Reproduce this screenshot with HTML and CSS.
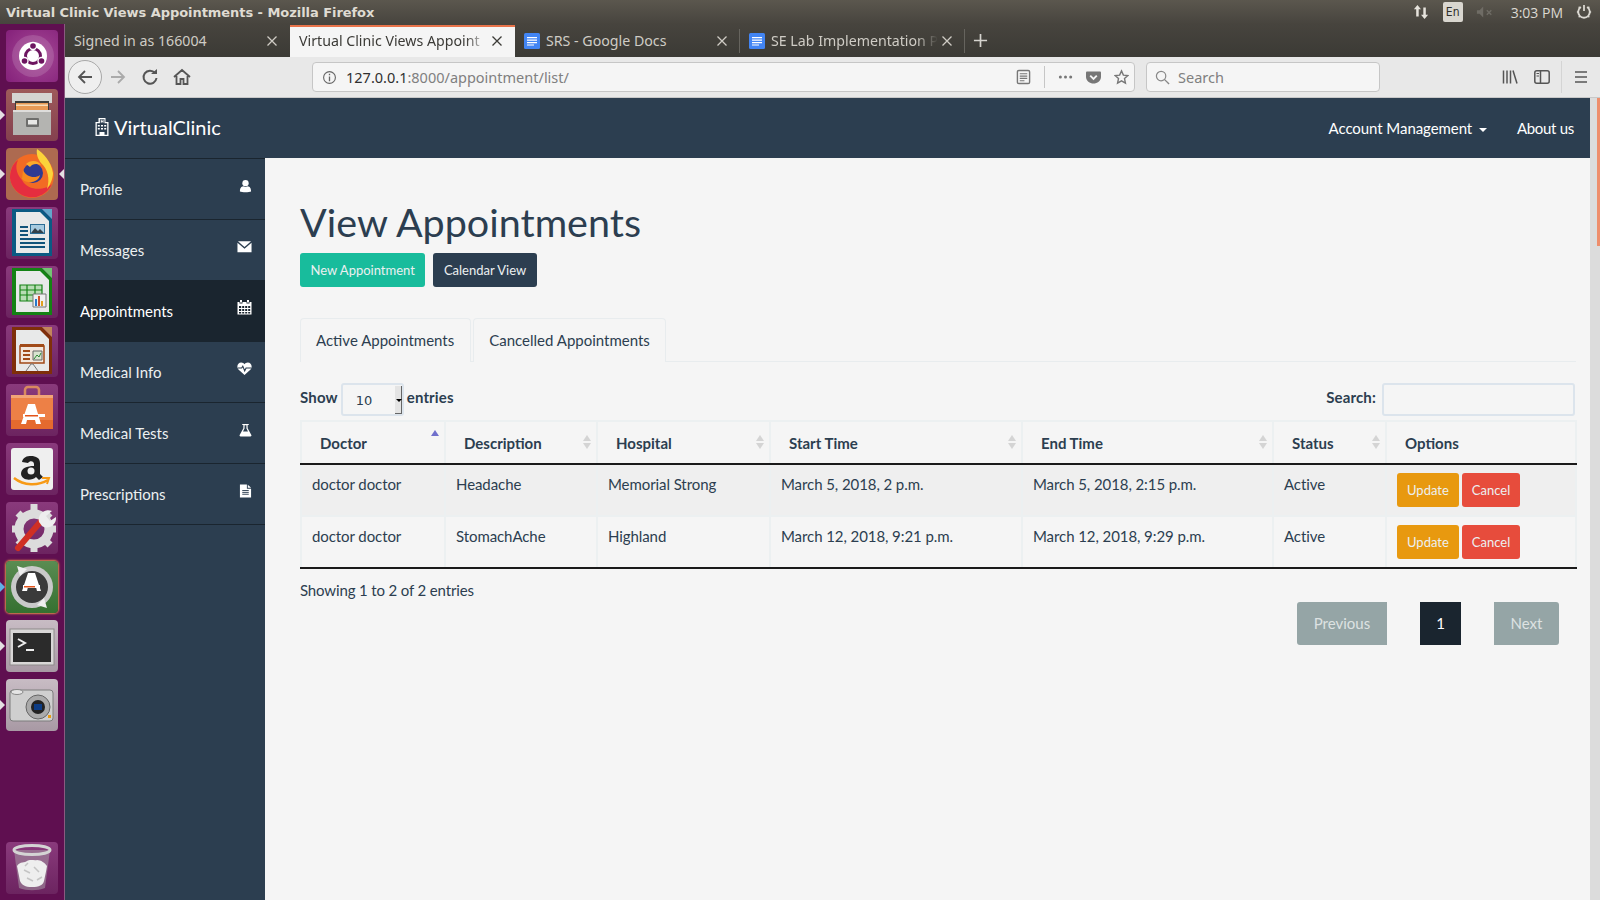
FILE: index.html
```html
<!DOCTYPE html>
<html lang="en">
<head>
<meta charset="utf-8">
<title>Virtual Clinic Views Appointments</title>
<link rel="stylesheet" href="styles.css">
</head>
<body>
<div class="screen">
  <header class="panel">
    <span class="panel-title">Virtual Clinic Views Appointments - Mozilla Firefox</span>
    <div class="indicators">
      <svg class="ind-net" viewBox="0 0 18 18"><path d="M5 1 1 6h2.600v8h2.800V6H9zM13 17l4-5h-2.600V4h-2.800v8H9z" fill="#e6e3dc"/></svg>
      <span class="ind-lang">En</span>
      <svg class="ind-sound" viewBox="0 0 20 14"><path d="M1 5h3l4-4v12l-4-4H1z" fill="#6f6c65"/><path d="m12 5 5 5m0-5-5 5" stroke="#6f6c65" stroke-width="1.600"/></svg>
      <span class="ind-clock">3:03 PM</span>
      <svg class="ind-power" viewBox="0 0 18 18"><path d="M5.500 3.500a6.500 6.500 0 1 0 7 0M9 1v7" fill="none" stroke="#dcd9d2" stroke-width="2"/><path d="M1 9h2m12 0h2M3 3l1.500 1.500M3 15l1.500-1.500M15 15l-1.500-1.500M15 3l-1.500 1.500" stroke="#dcd9d2" stroke-width="1.500"/></svg>
    </div>
  </header>
  <div class="desk">
    <nav class="launcher">
      <div class="tile tile-ubuntu">
        <svg viewBox="0 0 52 52"><circle cx="27" cy="26" r="21" fill="#fff" opacity=".14"/><circle cx="27" cy="26" r="14" fill="#fff"/><circle cx="27" cy="26" r="7.500" fill="none" stroke="#6d1560" stroke-width="3"/><circle cx="27" cy="16" r="4.200" fill="#fff"/><circle cx="18.500" cy="31" r="4.200" fill="#fff"/><circle cx="35.500" cy="31" r="4.200" fill="#fff"/><circle cx="27" cy="16" r="2.800" fill="#6d1560"/><circle cx="18.500" cy="31" r="2.800" fill="#6d1560"/><circle cx="35.500" cy="31" r="2.800" fill="#6d1560"/></svg>
      </div>
      <div class="tile tile-files has-pip">
        <svg viewBox="0 0 52 52"><path d="M6 4h40v10H6z" fill="#d5d5d2"/><path d="M9 12h34v9H9z" fill="#3d3d3b"/><path d="M10 14h32v7H10z" fill="#e89a55"/><path d="M10 15.500h32v1.500H10z" fill="#f7dcb8"/><path d="M7 21h38v25H7z" fill="#b4b4b1"/><path d="M7 21h38v2H7z" fill="#dedddb"/><rect x="20" y="29" width="13" height="9" rx="1" fill="#6e6e6c"/><rect x="22" y="31" width="9" height="4.500" fill="#e8e8e6"/></svg>
      </div>
      <div class="tile tile-firefox has-pip has-focus">
        <svg viewBox="0 0 52 52"><circle cx="26" cy="28" r="22" fill="#f26b24"/><path d="M4 30a22 22 0 0 0 42 6c-6 6-24 8-30-4C12 28 8 20 12 12 6 16 4 24 4 30z" fill="#e52e3f"/><path d="M31 1c6 4 14 12 16 24 0 6-3 12-6 16 3-10 1-20-6-26-3-4-5-9-4-14z" fill="#fbd33a"/><circle cx="27" cy="25" r="10" fill="#2f3a92"/><path d="M17 22c3 7 12 9 17 5-1 7-12 10-18 4z" fill="#f68a1f"/><path d="M20 16c4-4 12-4 15 1-5-2-9-1-11 2z" fill="#fba92b"/></svg>
      </div>
      <div class="tile tile-writer">
        <svg viewBox="0 0 52 52"><path d="M6 2h30l10 10v37H6z" fill="#0b5a83"/><path d="M36 2h10v10z" fill="#63a7cb"/><path d="M10 5h24l9 9v32H10z" fill="#e8e9e9"/><path d="M14 19h8v2h-8zm0 4h8v2h-8zm0 4h8v2h-8zm0 4h25v2H14zm0 4h25v2H14zm0 4h25v2H14z" fill="#11537a"/><path d="M24 17h15v10H24z" fill="#2c6c94"/><path d="M25 18h13v8H25z" fill="#a7cbe0"/><path d="m25 26 4-5 3 3 2-2 4 4z" fill="#33414a"/></svg>
      </div>
      <div class="tile tile-calc">
        <svg viewBox="0 0 52 52"><path d="M6 2h30l10 10v37H6z" fill="#148214"/><path d="M36 2h10v10z" fill="#74c474"/><path d="M10 5h24l9 9v32H10z" fill="#e8e9e9"/><path d="M14 19h22v16H14z" fill="#b8dcb4"/><path d="M14 19h22v16H14zm0 5h22m-22 5h22M21 19v16m8-16v16" fill="none" stroke="#148214" stroke-width="1.200"/><path d="M27 28h13v13H27z" fill="#f0f0f0" stroke="#777"/><path d="M29 33h2v7h-2z" fill="#2a77c9"/><path d="M32 30h2v10h-2z" fill="#d14f2a"/><path d="M35 35h2v5h-2z" fill="#e0a020"/></svg>
      </div>
      <div class="tile tile-impress">
        <svg viewBox="0 0 52 52"><path d="M6 2h30l10 10v37H6z" fill="#7f2f0a"/><path d="M36 2h10v10z" fill="#c2855c"/><path d="M10 5h24l9 9v32H10z" fill="#e8e9e9"/><path d="M14 21h24v17H14z" fill="#f3e7dd" stroke="#a14a18" stroke-width="1.500"/><path d="M14 19h24v3H14zm3 6h7v2h-7zm0 4h7v2h-7zm0 4h7v2h-7z" fill="#a14a18"/><path d="M27 26h9v9h-9z" fill="#d8e4d0" stroke="#666"/><path d="m28 34 3-4 2 2 2-4" stroke="#2b8a34" fill="none"/><path d="m20 46 5-7h2l5 7" fill="none" stroke="#777"/></svg>
      </div>
      <div class="tile tile-store">
        <svg viewBox="0 0 52 52"><path d="M19 14v-8a3 3 0 0 1 3-3h8a3 3 0 0 1 3 3v8" fill="none" stroke="#d98a5f" stroke-width="2.500"/><path d="M5 11h42v34H5z" fill="#ed8046"/><path d="M5 11h42v3H5z" fill="#f2a477"/><path d="M5 36h42v9H5z" fill="#e56a2e"/><path d="M22 20h7l6 20h-5l-1-4h-8l-1 4h-5z" fill="#fff"/><path d="M17 30h22v3H17z" fill="#fff"/><path d="M19 31h13v1.500H19z" fill="#e3541b"/></svg>
      </div>
      <div class="tile tile-amazon">
        <svg viewBox="0 0 52 52"><rect x="5" y="5" width="42" height="42" rx="3" fill="#efefef"/><path d="M16 19c1-5 5-6 9-6 5 0 9 2 9 7v11l3 3-4 3-3-3c-4 4-14 4-15-3 0-6 6-8 13-8v-2c0-3-4-4-6-1z" fill="#222"/><circle cx="25" cy="28" r="3.500" fill="#efefef"/><path d="M8 35c10 8 24 8 34 2" fill="none" stroke="#f79a16" stroke-width="2.500"/><path d="m36 35 7 0-2 6" fill="none" stroke="#f79a16" stroke-width="2"/></svg>
      </div>
      <div class="tile tile-tweak">
        <svg viewBox="0 0 52 52"><circle cx="28" cy="27" r="15" fill="none" stroke="#dcdcdc" stroke-width="9"/><path d="M28 2v9m0 32v7M6 27h7m30 0h7M12 11l5 5m22 22 5 5M12 43l5-5m22-22 5-5" stroke="#dcdcdc" stroke-width="7"/><path d="m12 46 24-28" stroke="#cf2f23" stroke-width="6" stroke-linecap="round"/><path d="M33 20c-2-8 6-14 13-11l-6 5 4 5 6-4c1 8-8 13-14 9z" fill="#eee"/></svg>
      </div>
      <div class="tile tile-update has-pip-blue">
        <svg viewBox="0 0 52 52"><circle cx="26" cy="26" r="21" fill="#c9c9c9"/><circle cx="26" cy="26" r="16" fill="#3a3a3a"/><path d="M22 12h7l6 18h-4l-1-4h-8l-1 4h-5z" fill="#fff"/><path d="M17 24h17v3H17z" fill="#fff"/><path d="M18 25h11v1.500H18z" fill="#e3541b"/><path d="m11 5 3 10 7-7z" fill="#eee"/><path d="m41 47-3-10-7 7z" fill="#eee"/></svg>
      </div>
      <div class="tile tile-terminal has-pip">
        <svg viewBox="0 0 52 52"><rect x="4" y="9" width="44" height="36" fill="#d9d7d7" stroke="#8d8a8a"/><rect x="7" y="13" width="38" height="29" fill="#2b2b2b"/><path d="m12 19 7 4-7 4" fill="none" stroke="#eee" stroke-width="2"/><path d="M20 29h8v2h-8z" fill="#eee"/></svg>
      </div>
      <div class="tile tile-camera has-pip">
        <svg viewBox="0 0 52 52"><rect x="4" y="11" width="43" height="31" rx="3" fill="#cfcfcf" stroke="#7c7c7c"/><ellipse cx="11" cy="13" rx="6" ry="2.500" fill="#e5e5e5" stroke="#888"/><circle cx="32" cy="28" r="12" fill="#aaa" stroke="#666"/><circle cx="32" cy="28" r="7" fill="#222"/><rect x="28" y="25" width="8" height="6" fill="#0d3c84"/><rect x="42" y="36" width="3" height="3" fill="#e89a12"/></svg>
      </div>
      <div class="tile tile-trash">
        <svg viewBox="0 0 52 52"><path d="M8 8 13 46c8 3 18 3 26 0l5-38z" fill="#a89aa6" opacity=".55"/><ellipse cx="26" cy="8" rx="18" ry="4.500" fill="none" stroke="#d4d4d4" stroke-width="3"/><path d="M11 24c3-5 8-3 10-5 3-2 8 0 10-1 4 0 8 3 10 6-1 6-2 10-3 15-1 4-5 6-12 6s-10-2-12-6c-1-5-2-10-3-15z" fill="#eee"/><path d="m18 28 6 3m4-6 5 5m-12 6 6 3m4-1 5-3m-17-11 3-3" stroke="#c4c4c4" stroke-width="1.500"/></svg>
      </div>
    </nav>
    <div class="firefox">
      <div class="tabstrip">
        <div class="ftab"><span class="ftab-text">Signed in as 166004</span><svg class="ftab-x" viewBox="0 0 10 10"><path d="m.5.5 9 9m0-9-9 9"/></svg></div>
        <div class="ftab ftab-active"><span class="ftab-text ftab-fade">Virtual Clinic Views Appoint</span><svg class="ftab-x" viewBox="0 0 10 10"><path d="m.5.5 9 9m0-9-9 9"/></svg></div>
        <div class="ftab ftab-sep">
          <svg class="doc-ico" viewBox="0 0 16 16"><rect width="16" height="16" rx="1.500" fill="#4285f4"/><path d="M3 4h10v1.200H3zm0 2.500h10v1.200H3zm0 2.500h10v1.200H3zm0 2.400h7v1H3z" fill="#fff"/></svg>
          <span class="ftab-text">SRS - Google Docs</span><svg class="ftab-x" viewBox="0 0 10 10"><path d="m.5.5 9 9m0-9-9 9"/></svg>
        </div>
        <div class="ftab ftab-sep">
          <svg class="doc-ico" viewBox="0 0 16 16"><rect width="16" height="16" rx="1.500" fill="#4285f4"/><path d="M3 4h10v1.200H3zm0 2.500h10v1.200H3zm0 2.500h10v1.200H3zm0 2.400h7v1H3z" fill="#fff"/></svg>
          <span class="ftab-text ftab-fade">SE Lab Implementation P</span><svg class="ftab-x" viewBox="0 0 10 10"><path d="m.5.5 9 9m0-9-9 9"/></svg>
        </div>
        <svg class="newtab" viewBox="0 0 16 16"><path d="M8 1v14M1 8h14" stroke="#d6d4cf" stroke-width="1.800"/></svg>
      </div>
      <div class="toolbar">
        <div class="back">
          <svg viewBox="0 0 18 18" class="tb18"><path d="M16 9H3m6-6L3 9l6 6" fill="none" stroke="#555" stroke-width="1.800"/></svg>
        </div>
        <svg viewBox="0 0 18 18" class="tb18 tb-forward"><path d="M2 9h13M9 3l6 6-6 6" fill="none" stroke="#aaa" stroke-width="1.800"/></svg>
        <svg viewBox="0 0 18 18" class="tb18 tb-reload"><path d="M14 5a6.500 6.500 0 1 0 1.500 5" fill="none" stroke="#555" stroke-width="2"/><path d="M10 6h6V1z" fill="#555"/></svg>
        <svg viewBox="0 0 18 18" class="tb18 tb-home"><path d="M1 9 9 2l8 7M3.500 8v8h4v-5h3v5h4V8" fill="none" stroke="#555" stroke-width="1.800"/></svg>
        <div class="urlbar">
          <svg viewBox="0 0 16 16" class="info"><circle cx="8" cy="8" r="6.300" fill="none" stroke="#666" stroke-width="1.200"/><path d="M7.300 7h1.400v5H7.300zm0-3h1.400v1.500H7.300z" fill="#666"/></svg>
          <span class="url"><b>127.0.0.1</b>:8000/appointment/list/</span>
          <svg viewBox="0 0 16 16" class="url-ico"><rect x="1.500" y="1" width="13" height="14" rx="1.500" fill="none" stroke="#777" stroke-width="1.500"/><path d="M4 4.500h8M4 7h8M4 9.500h8M4 12h5" stroke="#777" stroke-width="1.200"/></svg>
          <span class="url-sep"></span>
          <svg viewBox="0 0 16 16" class="url-ico url-dots"><circle cx="2.500" cy="8" r="1.600" fill="#777"/><circle cx="8" cy="8" r="1.600" fill="#777"/><circle cx="13.500" cy="8" r="1.600" fill="#777"/></svg>
          <svg viewBox="0 0 16 16" class="url-ico url-pocket"><path d="M1 2h14a1 1 0 0 1 1 1v5c0 4-4 7-8 7s-8-3-8-7V3a1 1 0 0 1 1-1z" fill="#777"/><path d="m4.500 6.500 3.500 3.500 3.500-3.500" fill="none" stroke="#f5f5f5" stroke-width="2"/></svg>
          <svg viewBox="0 0 16 16" class="url-ico url-star"><path d="m8 1.500 2 4.500 4.800.5-3.600 3.200 1 4.800L8 12.100l-4.200 2.400 1-4.800L1.200 6.500 6 6z" fill="none" stroke="#777" stroke-width="1.500"/></svg>
        </div>
        <div class="searchbar">
          <svg viewBox="0 0 16 16" class="info"><circle cx="6.500" cy="6.500" r="5" fill="none" stroke="#888" stroke-width="1.300"/><path d="m10 10 5 5" stroke="#888" stroke-width="1.500"/></svg>
          <span class="search-ph">Search</span>
        </div>
        <svg viewBox="0 0 16 16" class="tb16 tb-lib"><path d="M1.500 1.500v13M5 1.500v13M8.500 1.500v13M11 1.500l4 13" stroke="#555" stroke-width="1.500" fill="none"/></svg>
        <svg viewBox="0 0 16 16" class="tb16 tb-side"><rect x=".8" y="1.800" width="14.400" height="12.400" rx="2" fill="none" stroke="#555" stroke-width="1.500"/><path d="M6.500 2v12" stroke="#555" stroke-width="1.500"/><path d="M2.500 4.500h2.500M2.500 7h2.500" stroke="#555"/></svg>
        <span class="tb-sep"></span>
        <svg viewBox="0 0 16 16" class="tb16 tb-menu"><path d="M2 3h12M2 8h12M2 13h12" stroke="#555" stroke-width="1.700"/></svg>
      </div>
      <div class="viewport">
        <div class="page">
          <div class="navbar">
            <a class="brand">
              <svg viewBox="0 0 16 20" class="brand-ico"><path d="M4.500 1h7v4h3v14h-13V5h3zM2.800 6.200v11.600h2.700V15h5v2.800h2.700V6.200h-2.700V2.200h-4.600v4z" fill="#fff" fill-rule="evenodd"/><path d="M6.800 2.800h.9v1.100h.9V2.800h.9v3h-.9V4.700h-.9v1.100h-.9zM3.800 8h2v1.500h-2zm3.200 0h2v1.500H7zm3.200 0h2v1.500h-2zM3.800 11h2v1.500h-2zm3.200 0h2v1.500H7zm3.200 0h2v1.500h-2z" fill="#fff"/></svg>VirtualClinic
            </a>
            <div class="nav-right">
              <span class="nav-link nav-account">Account Management <i class="caret"></i></span>
              <span class="nav-link nav-about">About us</span>
            </div>
          </div>
          <div class="body">
            <aside class="sidebar">
              <a class="side-item"><span>Profile</span>
                <svg viewBox="0 0 14 14" class="side-ico"><circle cx="7" cy="4" r="3.400" fill="#fff"/><path d="M1 13c0-4 1.500-5.500 3.500-5.800 1.500 1 3.500 1 5 0C11.500 7.500 13 9 13 13c-2 1-10 1-12 0z" fill="#fff"/></svg></a>
              <a class="side-item"><span>Messages</span>
                <svg viewBox="0 0 16 14" class="side-ico side-ico-wide"><path d="M1 1.500h14L8 7.500z" fill="#fff"/><path d="M.5 3v10h15V3L8 9.500z" fill="#fff"/></svg></a>
              <a class="side-item side-active"><span>Appointments</span>
                <svg viewBox="0 0 15 15" class="side-ico side-ico-wide"><path d="M3 0h2v2.500H3zm7 0h2v2.500h-2z" fill="#fff"/><path d="M.5 2h2v1.500h3V2h4v1.500h3V2h2v12.500H.500z" fill="#fff"/><path d="M2 6h2.200v2H2zm3.200 0h2v2h-2zm3 0h2v2h-2zm3 0H13.200v2H11.200zM2 9h2.200v2H2zm3.200 0h2v2h-2zm3 0h2v2h-2zm3 0h2v2h-2zM2 12h2.200v1.500H2zm3.200 0h2v1.500h-2zm3 0h2v1.500h-2zm3 0h2v1.500h-2z" fill="#1a252f"/></svg></a>
              <a class="side-item"><span>Medical Info</span>
                <svg viewBox="0 0 16 14" class="side-ico side-ico-wide"><path d="M8 14 1.500 8C-1 5 1 .5 4.500.5 6 .5 7.300 1.300 8 2.500 8.700 1.300 10 .5 11.500.5 15 .5 17 5 14.500 8z" fill="#fff"/><path d="M1 6.500h4l1.200-2 2 5 1.500-3h5.500" fill="none" stroke="#2c3e50" stroke-width="1.200"/></svg></a>
              <a class="side-item"><span>Medical Tests</span>
                <svg viewBox="0 0 14 14" class="side-ico"><path d="M3.500.5h7v1.200H9.300V5l4 7.500c.4 1-.2 1.500-1 1.500H1.700c-.8 0-1.400-.5-1-1.500L4.700 5V1.700H3.500z" fill="#fff"/><path d="M6 2v3.500L4.300 8.500h5.400L8 5.500V2z" fill="#2c3e50"/></svg></a>
              <a class="side-item"><span>Prescriptions</span>
                <svg viewBox="0 0 14 15" class="side-ico"><path d="M1 .500h7.500V5H13v9.500H1z" fill="#fff"/><path d="M9.500.7 13 4H9.500z" fill="#fff"/><path d="M3.500 7h7M3.500 9h7M3.500 11h7" stroke="#2c3e50"/></svg></a>
            </aside>
            <main class="content">
              <h1 class="title">View Appointments</h1>
              <div class="actions">
                <a class="btn btn-green">New Appointment</a>
                <a class="btn btn-navy">Calendar View</a>
              </div>
              <ul class="tabs">
                <li class="tab tab-first">Active Appointments</li>
                <li class="tab">Cancelled Appointments</li>
              </ul>
              <div class="dt-top">
                <div class="dt-length">Show <span class="fake-select">10<span class="sel-spin"><i></i></span></span> entries</div>
                <div class="dt-search">Search: <span class="fake-input"></span></div>
              </div>
              <table class="grid">
                <colgroup>
                  <col class="c1"><col class="c2"><col class="c3"><col class="c4"><col class="c5"><col class="c6"><col class="c7">
                </colgroup>
                <thead>
                  <tr>
                    <th><span class="th-in">Doctor<span class="sort sort-asc"><i></i></span></span></th>
                    <th><span class="th-in">Description<span class="sort"><i></i><i></i></span></span></th>
                    <th><span class="th-in">Hospital<span class="sort"><i></i><i></i></span></span></th>
                    <th><span class="th-in">Start Time<span class="sort"><i></i><i></i></span></span></th>
                    <th><span class="th-in">End Time<span class="sort"><i></i><i></i></span></span></th>
                    <th><span class="th-in">Status<span class="sort"><i></i><i></i></span></span></th>
                    <th><span class="th-in">Options</span></th>
                  </tr>
                </thead>
                <tbody>
                  <tr class="odd">
                    <td>doctor doctor</td><td>Headache</td><td>Memorial Strong</td><td>March 5, 2018, 2 p.m.</td><td>March 5, 2018, 2:15 p.m.</td><td>Active</td>
                    <td class="opts"><a class="btn btn-amber">Update</a><a class="btn btn-red">Cancel</a></td>
                  </tr>
                  <tr>
                    <td>doctor doctor</td><td>StomachAche</td><td>Highland</td><td>March 12, 2018, 9:21 p.m.</td><td>March 12, 2018, 9:29 p.m.</td><td>Active</td>
                    <td class="opts"><a class="btn btn-amber">Update</a><a class="btn btn-red">Cancel</a></td>
                  </tr>
                </tbody>
              </table>
              <div class="dt-info">Showing 1 to 2 of 2 entries</div>
              <div class="pager">
                <a class="pg pg-off pg-prev">Previous</a>
                <a class="pg pg-cur">1</a>
                <a class="pg pg-off pg-next">Next</a>
              </div>
            </main>
          </div>
        </div>
        <div class="scrollbar"><div class="thumb"></div></div>
      </div>
    </div>
  </div>
</div>
</body>
</html>
```

FILE: styles.css
```css
* { box-sizing: border-box; }
html, body { margin: 0; padding: 0; height: 100%; overflow: hidden; }
body { font-family: "Lato", "Liberation Sans", sans-serif; color: #2c3e50; background: #f5f5f5; }
.screen { width: 1600px; height: 900px; display: flex; flex-direction: column; }

/* top panel */
.panel { height: 24px; flex: none; display: flex; align-items: center; justify-content: space-between; padding: 0 8px 0 6px; background: linear-gradient(#5b574e, #47443e); }
.panel-title { font-family: "DejaVu Sans", sans-serif; font-weight: 700; font-size: 13px; color: #dfdbd2; letter-spacing: -.05px; }
.indicators { display: flex; align-items: center; }
.ind-net { width: 16px; height: 18px; margin-right: 14px; }
.ind-lang { width: 20px; height: 20px; background: #d9d6cf; border-radius: 2px; font: 400 12px "DejaVu Sans Condensed", "DejaVu Sans", sans-serif; color: #2f2e2a; text-align: center; line-height: 20px; margin-right: 13px; }
.ind-sound { width: 18px; height: 14px; margin-right: 17px; }
.ind-clock { font: 14px "Open Sans", sans-serif; color: #dcd9d2; margin-right: 13px; }
.ind-power { width: 16px; height: 16px; }

.desk { flex: 1; display: flex; min-height: 0; }

/* launcher */
.launcher { width: 65px; flex: none; display: flex; flex-direction: column; gap: 7px; padding: 6px 0 6px 6px; background: #5f0f50; border-right: 1px solid #8a5a80; }
.tile { position: relative; width: 52px; height: 52px; border-radius: 4px; background: linear-gradient(#8a3a7c, #6c2460); flex: none; }
.tile svg { display: block; width: 52px; height: 52px; }
.tile-ubuntu { background: radial-gradient(circle at 60% 50%, #a64a96, #84207a); }
.tile-files { background: linear-gradient(#9e5a5a, #84404f); }
.tile-firefox { background: #ad6a50; }
.tile-update { background: linear-gradient(#5a8c52, #357030); box-shadow: 0 0 2px 1px #e08a4c; }
.tile-terminal, .tile-camera { background: linear-gradient(#c8bcc4, #a899a4); }
.tile-trash { margin-top: auto; }
.has-pip::before, .has-pip-blue::before { content: ""; position: absolute; left: -6px; top: 21px; border-left: 5px solid #e4dfe2; border-top: 5px solid transparent; border-bottom: 5px solid transparent; }
.has-pip-blue::before { border-left-color: #5fb0e8; }
.has-focus::after { content: ""; position: absolute; right: -6px; top: 21px; border-right: 5px solid #e4dfe2; border-top: 5px solid transparent; border-bottom: 5px solid transparent; }

/* firefox */
.firefox { flex: 1; min-width: 0; display: flex; flex-direction: column; }
.tabstrip { height: 33px; flex: none; display: flex; align-items: stretch; background: linear-gradient(#47443e, #3b3a35); font: 14.200px "Noto Sans", sans-serif; color: #cfccc5; }
.ftab { width: 225px; flex: none; display: flex; align-items: center; padding: 0 13px 0 9px; position: relative; }
.ftab-text { flex: 1; white-space: nowrap; min-width: 0; }
.ftab-fade { -webkit-mask-image: linear-gradient(to left, transparent 0, #000 22px); mask-image: linear-gradient(to left, transparent 0, #000 22px); }
.ftab-x { width: 10px; height: 10px; flex: none; margin-left: 4px; fill: none; stroke: #cfccc5; stroke-width: 1.300; }
.ftab-active { background: #f5f5f5; color: #3c3b37; border-top: 2px solid #e8734a; margin-top: 1px; padding-bottom: 3px; }
.ftab-active .ftab-x { stroke: #3c3b37; }
.ftab-sep::after { content: ""; position: absolute; right: 0; top: 5px; bottom: 4px; width: 1px; background: #66645e; }
.doc-ico { width: 16px; height: 16px; margin-right: 6px; flex: none; }
.newtab { width: 15px; height: 15px; align-self: center; margin-left: 8px; }

.toolbar { height: 41px; flex: none; display: flex; align-items: center; background: #e8e8e8; border-bottom: 1px solid #c8c8c8; padding-left: 3px; }
.back { width: 34px; height: 34px; border-radius: 50%; border: 1px solid #a8a8a8; background: #efefef; display: flex; align-items: center; justify-content: center; flex: none; }
.tb18 { width: 18px; height: 18px; flex: none; }
.tb-forward { margin-left: 7px; }
.tb-reload { margin-left: 14px; }
.tb-home { margin-left: 14px; }
.urlbar { width: 823px; height: 30px; margin-left: 121px; flex: none; display: flex; align-items: center; background: #f5f5f5; border: 1px solid #c6c6c6; border-radius: 4px; padding: 0 5px 0 9px; }
.info { width: 15px; height: 15px; flex: none; }
.url { flex: 1; font: 14.500px "Noto Sans", sans-serif; color: #808080; margin-left: 9px; white-space: nowrap; }
.url b { font-weight: 400; color: #2f2f2f; }
.url-ico { width: 15px; height: 16px; flex: none; }
.url-sep { width: 1px; height: 22px; background: #c6c6c6; margin: 0 13px; }
.url-pocket { margin-left: 13px; }
.url-star { margin-left: 13px; }
.searchbar { width: 234px; height: 30px; margin-left: 11px; flex: none; display: flex; align-items: center; background: #f5f5f5; border: 1px solid #c6c6c6; border-radius: 4px; padding-left: 8px; }
.search-ph { font: 14.500px "Noto Sans", sans-serif; color: #808080; margin-left: 8px; }
.tb16 { width: 16px; height: 16px; flex: none; }
.tb-lib { margin-left: 122px; }
.tb-side { margin-left: 16px; }
.tb-sep { width: 1px; height: 32px; background: #d4d4d4; margin-left: 11px; }
.tb-menu { margin-left: 11px; }

.viewport { flex: 1; min-height: 0; display: flex; }
.page { flex: 1; min-width: 0; display: flex; flex-direction: column; background: #f5f5f5; }
.scrollbar { width: 10px; flex: none; background: #dcdcdc; display: flex; justify-content: flex-end; }
.thumb { width: 3px; height: 148px; background: #ee8e6c; }

/* site navbar */
.navbar { height: 60px; flex: none; display: flex; align-items: center; justify-content: space-between; background: #2c3e50; color: #fff; padding: 0 16px 0 29px; }
.brand { display: flex; align-items: center; font-size: 20px; color: #fff; padding-bottom: 2px; }
.brand-ico { width: 16px; height: 20px; margin-right: 4px; }
.nav-right { display: flex; gap: 30px; font-size: 15px; }
.nav-link { white-space: nowrap; }
.nav-account { letter-spacing: -.07px; }
.nav-about { letter-spacing: -.3px; }
.caret { display: inline-block; margin-left: 3px; vertical-align: 2px; border-top: 4px solid #fff; border-left: 4px solid transparent; border-right: 4px solid transparent; }

.body { flex: 1; min-height: 0; display: flex; }
.sidebar { width: 200px; flex: none; background: #2c3e50; border-top: 1px solid #1a252f; }
.side-item { height: 61px; display: flex; align-items: center; justify-content: space-between; padding: 0 13px 0 15px; border-bottom: 1px solid #1a252f; font-size: 15px; color: #ecf0f1; }
.side-item span { padding-bottom: 1px; }
.side-active { background: #1a252f; color: #fff; border-bottom-color: #1a252f; }
.side-ico { width: 13px; height: 14px; margin-top: -7px; }
.side-ico-wide { width: 15px; height: 15px; }

/* content */
.content { flex: 1; min-width: 0; padding: 40px 14px 0 35px; }
.title { margin: 0; font-size: 39.500px; font-weight: 400; line-height: 47px; color: #2c3e50; }
.actions { display: flex; gap: 8px; margin-top: 8px; }
.btn { display: inline-block; color: #ecf0f1; font-size: 13px; line-height: 18px; padding: 8px 10.500px; border-radius: 3px; white-space: nowrap; }
.btn-green { background: #18bc9c; }
.btn-navy { background: #2c3e50; }
.btn-amber { background: #e8990f; }
.btn-red { background: #e74c3c; margin-left: 3px; }
.tabs { list-style: none; margin: 31px 0 0; padding: 0; display: flex; gap: 2px; border-bottom: 1px solid #e8ecee; height: 44px; }
.tab { height: 44px; padding: 11px 15px 0; border: 1px solid #e8ecee; border-bottom: 0; border-radius: 4px 4px 0 0; font-size: 15px; line-height: 20px; color: #2c3e50; background: #f5f5f5; }
.tab-first { padding-right: 16px; }
.dt-top { display: flex; justify-content: space-between; align-items: center; margin-top: 20px; padding-right: 1px; font-size: 15px; font-weight: 700; height: 34px; color: #2c3e50; letter-spacing: .15px; }
.dt-length, .dt-search { display: flex; align-items: center; gap: 3px; padding-bottom: 4px; }
.dt-search { gap: 6px; }
.fake-select { position: relative; width: 63px; height: 33px; margin-top: 4px; border: 2px solid #dce4ec; border-radius: 3px; background: #f5f5f5; font-weight: 400; font-family: "DejaVu Sans", sans-serif; font-size: 13px; color: #2c3e50; padding: 8px 0 0 13px; line-height: 16px; letter-spacing: 0; }
.sel-spin { position: absolute; top: 1px; right: 0; width: 7px; height: 28px; background: #e4e4e4; border-right: 1px solid #666; border-bottom: 1px solid #666; }
.sel-spin i { position: absolute; left: 1px; top: 13px; border-top: 3px solid #000; border-left: 3px solid transparent; border-right: 3px solid transparent; }
.fake-input { width: 193px; height: 33px; margin-top: 4px; border: 2px solid #dce4ec; border-radius: 3px; background: #f5f5f5; }

.grid { width: 1275px; table-layout: fixed; border-collapse: collapse; margin-top: 4px; font-size: 15px; color: #2c3e50; }
.c1 { width: 144px; } .c2 { width: 152px; } .c3 { width: 173px; } .c4 { width: 252px; } .c5 { width: 251px; } .c6 { width: 113px; } .c7 { width: 190px; }
.grid th, .grid td { border: 2px solid #ecf0f1; border-top: 0; }
.grid th { height: 41px; padding: 0; font-weight: 700; text-align: left; border-top: 2px solid #ecf0f1; border-bottom: 2px solid #1a1a1a; }
.th-in { display: flex; justify-content: space-between; align-items: center; height: 41px; padding: 0 5px 0 18px; }
.sort { display: flex; flex-direction: column; gap: 2px; align-self: flex-start; margin-top: 13px; }
.sort i { display: block; border-left: 4px solid transparent; border-right: 4px solid transparent; }
.sort i:first-child { border-bottom: 6px solid #d4d4d4; }
.sort i:last-child:not(:first-child) { border-top: 6px solid #d4d4d4; }
.sort-asc { margin-top: 8px; }
.sort-asc i:first-child { border-bottom-color: #7070cc; }
.grid td { padding: 9px 10px 10px; vertical-align: top; line-height: 20px; letter-spacing: -.08px; }
.grid tbody tr:first-child td { height: 52px; }
.grid tbody tr:last-child td { height: 52px; border-bottom: 2px solid #1a1a1a; }
.odd td { background: #efefef; }
.grid td.opts { padding: 8px 10px 0 10px; white-space: nowrap; letter-spacing: 0; }
.opts .btn { padding: 8px 10px; }
.dt-info { margin-top: 11px; font-size: 15px; line-height: 20px; letter-spacing: -.14px; }
.pager { display: flex; justify-content: flex-end; margin-top: 2px; padding-right: 17px; font-size: 15px; }
.pg { height: 43px; line-height: 43px; color: #fff; text-align: center; }
.pg-off { background: #95a5a6; color: #dde2e2; }
.pg-prev { width: 90px; border-radius: 3px 0 0 3px; margin-right: 33px; }
.pg-cur { width: 41px; background: #1a252f; margin-right: 33px; }
.pg-next { width: 65px; border-radius: 0 3px 3px 0; }
```
